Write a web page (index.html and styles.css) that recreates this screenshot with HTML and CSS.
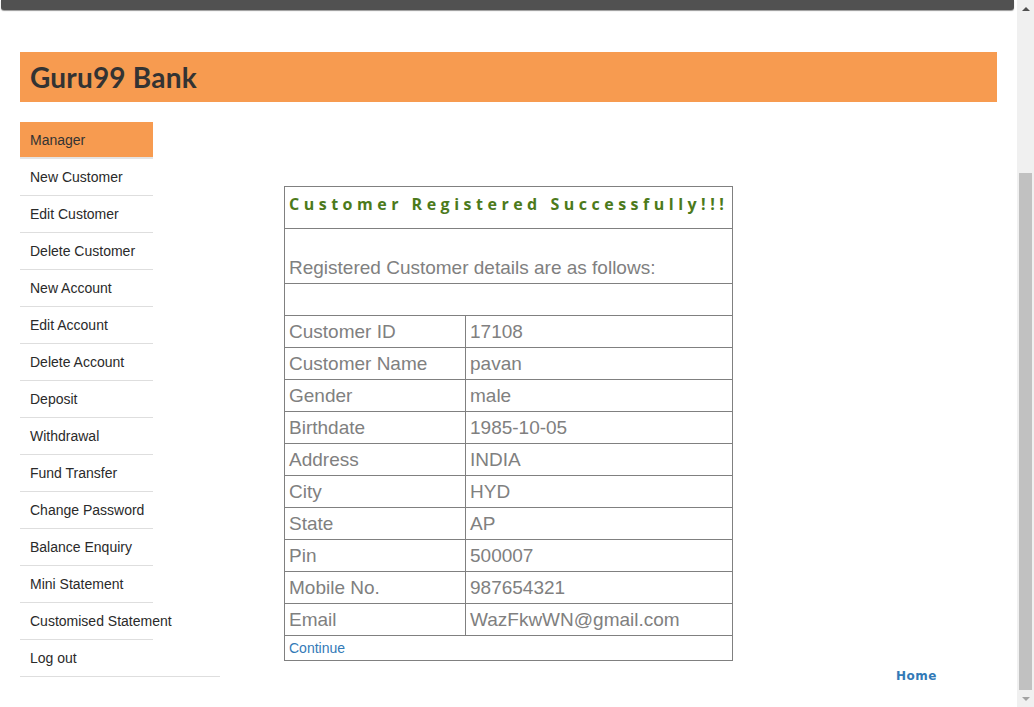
FILE: index.html
```html
<!DOCTYPE html>
<html>
<head>
<meta charset="utf-8">
<link rel="stylesheet" href="styles.css">
</head>
<body>
<div class="page">
  <div class="topbar"></div>
  <div class="header"><h1 class="brand">Guru99 Bank</h1></div>
  <div class="content">
    <ul class="menu">
      <li class="menu-item active">Manager</li>
      <li class="menu-item">New Customer</li>
      <li class="menu-item">Edit Customer</li>
      <li class="menu-item">Delete Customer</li>
      <li class="menu-item">New Account</li>
      <li class="menu-item">Edit Account</li>
      <li class="menu-item">Delete Account</li>
      <li class="menu-item">Deposit</li>
      <li class="menu-item">Withdrawal</li>
      <li class="menu-item">Fund Transfer</li>
      <li class="menu-item">Change Password</li>
      <li class="menu-item">Balance Enquiry</li>
      <li class="menu-item">Mini Statement</li>
      <li class="menu-item">Customised Statement</li>
      <li class="menu-item last">Log out</li>
    </ul>
    <div class="main">
      <table class="details">
        <tr><td colspan="2" class="title">Customer Registered Successfully!!!</td></tr>
        <tr><td colspan="2" class="intro">Registered Customer details are as follows:</td></tr>
        <tr><td colspan="2" class="blank"></td></tr>
        <tr><td class="key">Customer ID</td><td class="val">17108</td></tr>
        <tr><td class="key">Customer Name</td><td class="val">pavan</td></tr>
        <tr><td class="key">Gender</td><td class="val">male</td></tr>
        <tr><td class="key">Birthdate</td><td class="val">1985-10-05</td></tr>
        <tr><td class="key">Address</td><td class="val">INDIA</td></tr>
        <tr><td class="key">City</td><td class="val">HYD</td></tr>
        <tr><td class="key">State</td><td class="val">AP</td></tr>
        <tr><td class="key">Pin</td><td class="val">500007</td></tr>
        <tr><td class="key">Mobile No.</td><td class="val">987654321</td></tr>
        <tr><td class="key">Email</td><td class="val">WazFkwWN@gmail.com</td></tr>
        <tr><td colspan="2" class="cont"><a href="#" class="link">Continue</a></td></tr>
      </table>
      <div class="home-row"><a href="#" class="home">Home</a></div>
    </div>
  </div>
</div>
<div class="scrollbar">
  <div class="arrow up"></div>
  <div class="track"><div class="thumb"></div></div>
  <div class="arrow down"></div>
</div>
</body>
</html>
```
FILE: styles.css
```css
html, body {
  margin: 0;
  padding: 0;
  height: 707px;
  overflow: hidden;
  background: #fff;
}
body {
  display: flex;
  font-family: "Liberation Sans", Arial, sans-serif;
}
.page {
  width: 1017px;
  flex: none;
}
.topbar {
  height: 10px;
  margin: 0 3px 0 1px;
  background: #515151;
  border-radius: 0 0 3px 3px;
  box-shadow: 0 1px 1px #999;
}
.header {
  margin: 42px 20px 0 20px;
  height: 50px;
  background: #f79b50;
  display: flex;
  align-items: center;
}
.brand {
  margin: 0 0 0 10px;
  font-family: "Lato", "DejaVu Sans", sans-serif;
  font-weight: 700;
  font-size: 28px;
  color: #333;
  letter-spacing: 0.2px;
}
.content {
  display: flex;
  align-items: flex-start;
  margin-top: 20px;
  padding-left: 20px;
}
.menu {
  list-style: none;
  margin: 0;
  padding: 0;
  width: 200px;
  flex: none;
  border-bottom: 1px solid #dedede;
}
.menu-item {
  width: 123px;
  height: 36px;
  line-height: 36px;
  padding-left: 10px;
  border-bottom: 1px solid #dedede;
  font-size: 14px;
  color: #2a2a2a;
  white-space: nowrap;
}
.menu-item.active {
  background: #f79b50;
  height: 35px;
  line-height: 36px;
  border-bottom: 2px solid #e4e4e4;
  color: #333;
}
.menu-item.last {
  border-bottom: none;
}
.main {
  flex: 1;
  padding-left: 64px;
  padding-top: 64px;
}
.details {
  border-collapse: collapse;
  width: 446px;
  border: 1px solid #808080;
}
.details td {
  border: 1px solid #808080;
  padding: 0 4px;
  font-size: 19px;
  color: #808080;
}
.title {
  height: 42px;
  vertical-align: top;
  padding-top: 6px !important;
  box-sizing: border-box;
  font-family: "Open Sans", "DejaVu Sans", sans-serif;
  font-weight: 700;
  font-size: 16px !important;
  letter-spacing: 4.5px;
  color: #4c7a1b !important;
  white-space: nowrap;
}
.intro {
  height: 55px;
  box-sizing: border-box;
  vertical-align: bottom;
  padding-bottom: 4px !important;
}
.blank {
  height: 32px;
  box-sizing: border-box;
}
.key, .val {
  height: 32px;
  box-sizing: border-box;
}
.key {
  width: 181px;
}
.cont {
  height: 25px;
  box-sizing: border-box;
  font-size: 14px !important;
}
.link {
  color: #337ab7;
  text-decoration: none;
}
.home-row {
  display: flex;
  justify-content: flex-end;
  width: 653px;
  margin-top: 8px;
}
.home {
  font-family: "DejaVu Sans", Verdana, sans-serif;
  font-weight: 700;
  font-size: 12px;
  color: #337ab7;
  text-decoration: none;
  letter-spacing: 0.5px;
}
.scrollbar {
  width: 17px;
  flex: none;
  height: 707px;
  background: #f0f0f0;
  display: flex;
  flex-direction: column;
}
.arrow {
  height: 17px;
  display: flex;
  align-items: center;
  justify-content: center;
  flex: none;
}
.arrow.up::before {
  content: "";
  border-left: 4px solid transparent;
  border-right: 4px solid transparent;
  border-bottom: 4px solid #505050;
}
.arrow.down::before {
  content: "";
  border-left: 4px solid transparent;
  border-right: 4px solid transparent;
  border-top: 4px solid #a3a3a3;
}
.track {
  flex: 1;
  display: flex;
  flex-direction: column;
  padding: 156px 2px 0 2px;
}
.thumb {
  flex: 1;
  background: #c1c1c1;
}
```
